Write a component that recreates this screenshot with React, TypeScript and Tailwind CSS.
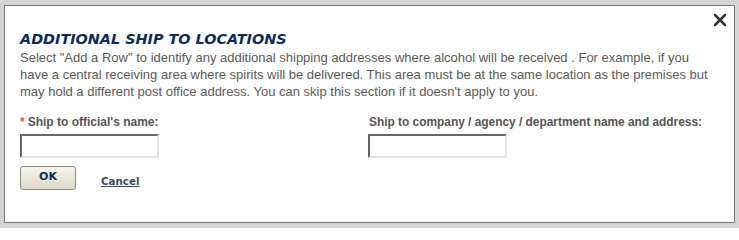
import { X } from "lucide-react";

export default function App() {
  return (
    <div className="w-[739px] h-[228px] bg-[#d4d4d4] pt-[5px] pl-[4px] overflow-hidden">
      <div className="relative w-[731px] h-[218px] bg-white border border-[#7a7a7a] px-[15px] pt-[23px]">
        {/* close */}
        <button className="absolute right-[4px] top-[4px] text-[#333]">
          <X size={20} strokeWidth={3} />
        </button>

        <h2 className="font-['DejaVu_Sans',sans-serif] text-[14.4px] leading-[20px] font-bold italic text-[#0d2b5c]">
          ADDITIONAL SHIP TO LOCATIONS
        </h2>
        <p className="font-['Liberation_Sans',Arial,sans-serif] text-[13px] leading-[17px] text-[#5a5a5a] whitespace-nowrap">
          Select "Add a Row" to identify any additional shipping addresses where alcohol will be received . For example, if you
          <br />
          have a central receiving area where spirits will be delivered. This area must be at the same location as the premises but
          <br />
          may hold a different post office address. You can skip this section if it doesn't apply to you.
        </p>

        <div className="flex mt-[15px] font-['Liberation_Sans',Arial,sans-serif]">
          <div className="w-[348px]">
            <label className="block text-[12px] leading-[14px] font-bold text-[#555]">
              <span className="text-[#e0661c] mr-[3px]">*</span>Ship to official's name:
            </label>
            <input className="block mt-[5px] w-[139px] h-[24px] border-2 border-t-[#666] border-l-[#666] border-b-[#e3e3e3] border-r-[#e3e3e3] bg-white outline-none" />
          </div>
          <div>
            <label className="block text-[11.9px] leading-[14px] font-bold text-[#555] pl-[1px]">
              Ship to company / agency / department name and address:
            </label>
            <input className="block mt-[5px] w-[139px] h-[24px] border-2 border-t-[#666] border-l-[#666] border-b-[#e3e3e3] border-r-[#e3e3e3] bg-white outline-none" />
          </div>
        </div>

        <div className="flex items-end mt-[8px] font-['DejaVu_Sans',Verdana,sans-serif]">
          <button className="w-[56px] h-[24px] rounded-[3px] border border-[#8a8a80] bg-gradient-to-b from-[#f8f6ec] to-[#dcd8c6] text-[11px] font-bold text-[#0d2b5c] leading-none pb-[3px]">
            OK
          </button>
          <a href="#" className="ml-[25px] mb-[1px] text-[10.3px] font-bold text-[#3c4a66] underline">
            Cancel
          </a>
        </div>
      </div>
    </div>
  );
}
